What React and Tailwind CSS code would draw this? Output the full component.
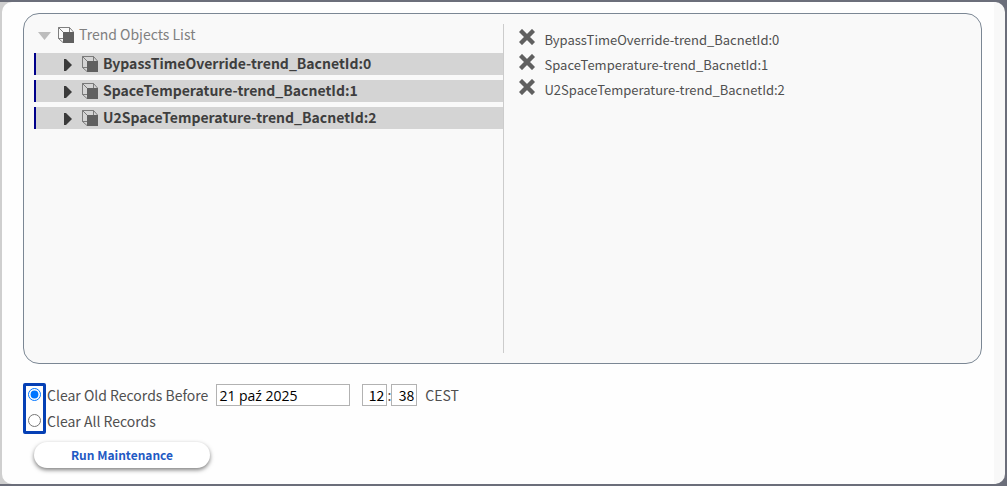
import React, { useState } from 'react';

const trends = [
  'BypassTimeOverride-trend_BacnetId:0',
  'SpaceTemperature-trend_BacnetId:1',
  'U2SpaceTemperature-trend_BacnetId:2',
];

const CubeIcon = () => (
  <svg width="16" height="16" viewBox="0 0 16 16" className="shrink-0" aria-hidden="true">
    <path d="M.5.5H11.5L15.5 5M.5.5V11.5L5 15.5M.5.5L5.5 5.5M11.5.5V5M.5 11.5H5" fill="none" stroke="#707070" strokeWidth="0.9" />
    <rect x="5" y="5" width="11" height="11" fill="#606060" />
  </svg>
);

const RemoveIcon = () => (
  <svg width="16" height="16" viewBox="0 0 16 16" aria-hidden="true">
    <path d="M3 3L13 13M13 3L3 13" stroke="#606060" strokeWidth="4.4" strokeLinecap="square" />
  </svg>
);

const TreeRow = ({ name }) => (
  <li className="flex h-[22px] items-center border-l-2 border-[#00008b] bg-[#d4d4d4] pl-7">
    <button type="button" aria-label={`Expand ${name}`} className="mr-[10px] pt-0.5">
      <svg width="8" height="12" viewBox="0 0 8 12">
        <path d="M0 0L2 0L8 6L2 12L0 12Z" fill="#3a3a3a" />
      </svg>
    </button>
    <CubeIcon />
    <span className="ml-[5px] pb-0.5 text-[14px] leading-5 font-bold text-[#3e3e3e]">{name}</span>
  </li>
);

export default function App() {
  const [selected, setSelected] = useState(trends);
  const [mode, setMode] = useState('before');

  const removeTrend = (name) => {
    setSelected(selected.filter((item) => item !== name));
  };

  return (
    <div className="flex min-h-screen border-y-2 border-r-2 border-[#6b6e7a] bg-[linear-gradient(to_right,#cfcfcf_50%,#6b6e7a_50%)] pl-0.5 font-['Noto_Sans_CJK_SC','Noto_Sans',sans-serif] text-[#505050]">
      <main className="flex flex-1 flex-col rounded-[10px] border-r-[11px] border-[#f8f8f8] bg-[#fefefe] pt-[11px] pr-3 pb-4 pl-[21px]">
        {/* Trend selection */}
        <section className="grid min-h-[351px] grid-cols-2 rounded-2xl border border-[#7b8794] bg-[#f9f9f9] p-[10px]">
          <div>
            <div className="mb-[7px] flex h-[22px] items-center pl-1">
              <button type="button" aria-label="Collapse list" className="mr-[7px] pt-0.5">
                <svg width="13" height="8" viewBox="0 0 13 8">
                  <path d="M0 0H13L6.5 8Z" fill="#bdbdbd" />
                </svg>
              </button>
              <CubeIcon />
              <span className="ml-[5px] pb-0.5 text-[14px] leading-5 text-[#808080]">Trend Objects List</span>
            </div>
            <ul className="flex flex-col gap-[5px]">
              {trends.map((name) => (
                <TreeRow key={name} name={name} />
              ))}
            </ul>
          </div>

          <ul className="border-l border-[#cccccc] pt-0.5 pl-[15px]">
            {selected.map((name) => (
              <li key={name} className="flex h-[25px] items-start">
                <button type="button" aria-label={`Remove ${name}`} onClick={() => removeTrend(name)} className="mt-[3px] mr-[10px]">
                  <RemoveIcon />
                </button>
                <span className="pt-1 text-[13px] leading-5">{name}</span>
              </li>
            ))}
          </ul>
        </section>

        {/* Maintenance options */}
        <div className="mt-[19px] flex text-[14px]">
          <div className="flex flex-col items-center gap-[13px] self-start rounded-[2px] border-[3px] border-[#0540b5] px-0.5 pt-0.5 pb-1">
            <input id="clear-before" type="radio" name="mode" className="m-0 h-[13px] w-[13px]" checked={mode === 'before'} onChange={() => setMode('before')} />
            <input id="clear-all" type="radio" name="mode" className="m-0 h-[13px] w-[13px]" checked={mode === 'all'} onChange={() => setMode('all')} />
          </div>
          <div className="pt-px pl-px">
            <div className="flex h-[22px] items-center">
              <label htmlFor="clear-before">Clear Old Records Before</label>
              <input type="text" aria-label="Date" defaultValue="21 paź 2025" className="ml-2 h-[22px] w-[134px] border border-[#b2b2b2] bg-white px-0.5 font-['Open_Sans',sans-serif] text-black" />
              <input type="text" aria-label="Hour" defaultValue="12" className="ml-3 h-[22px] w-[25px] border border-[#b2b2b2] bg-white px-0.5 text-right text-black" />
              <span>:</span>
              <input type="text" aria-label="Minute" defaultValue="38" className="h-[22px] w-[26px] border border-[#b2b2b2] bg-white px-0.5 text-right text-black" />
              <span className="ml-2">CEST</span>
            </div>
            <label htmlFor="clear-all" className="mt-1 block leading-[22px]">Clear All Records</label>
          </div>
        </div>

        <button type="button" className="mt-2 ml-[11px] h-[26px] w-44 self-start rounded-full bg-white text-[12px] font-bold text-[#1f5ac4] shadow-[0_2px_4px_rgba(0,0,0,0.5)]">
          Run Maintenance
        </button>
      </main>
    </div>
  );
}
